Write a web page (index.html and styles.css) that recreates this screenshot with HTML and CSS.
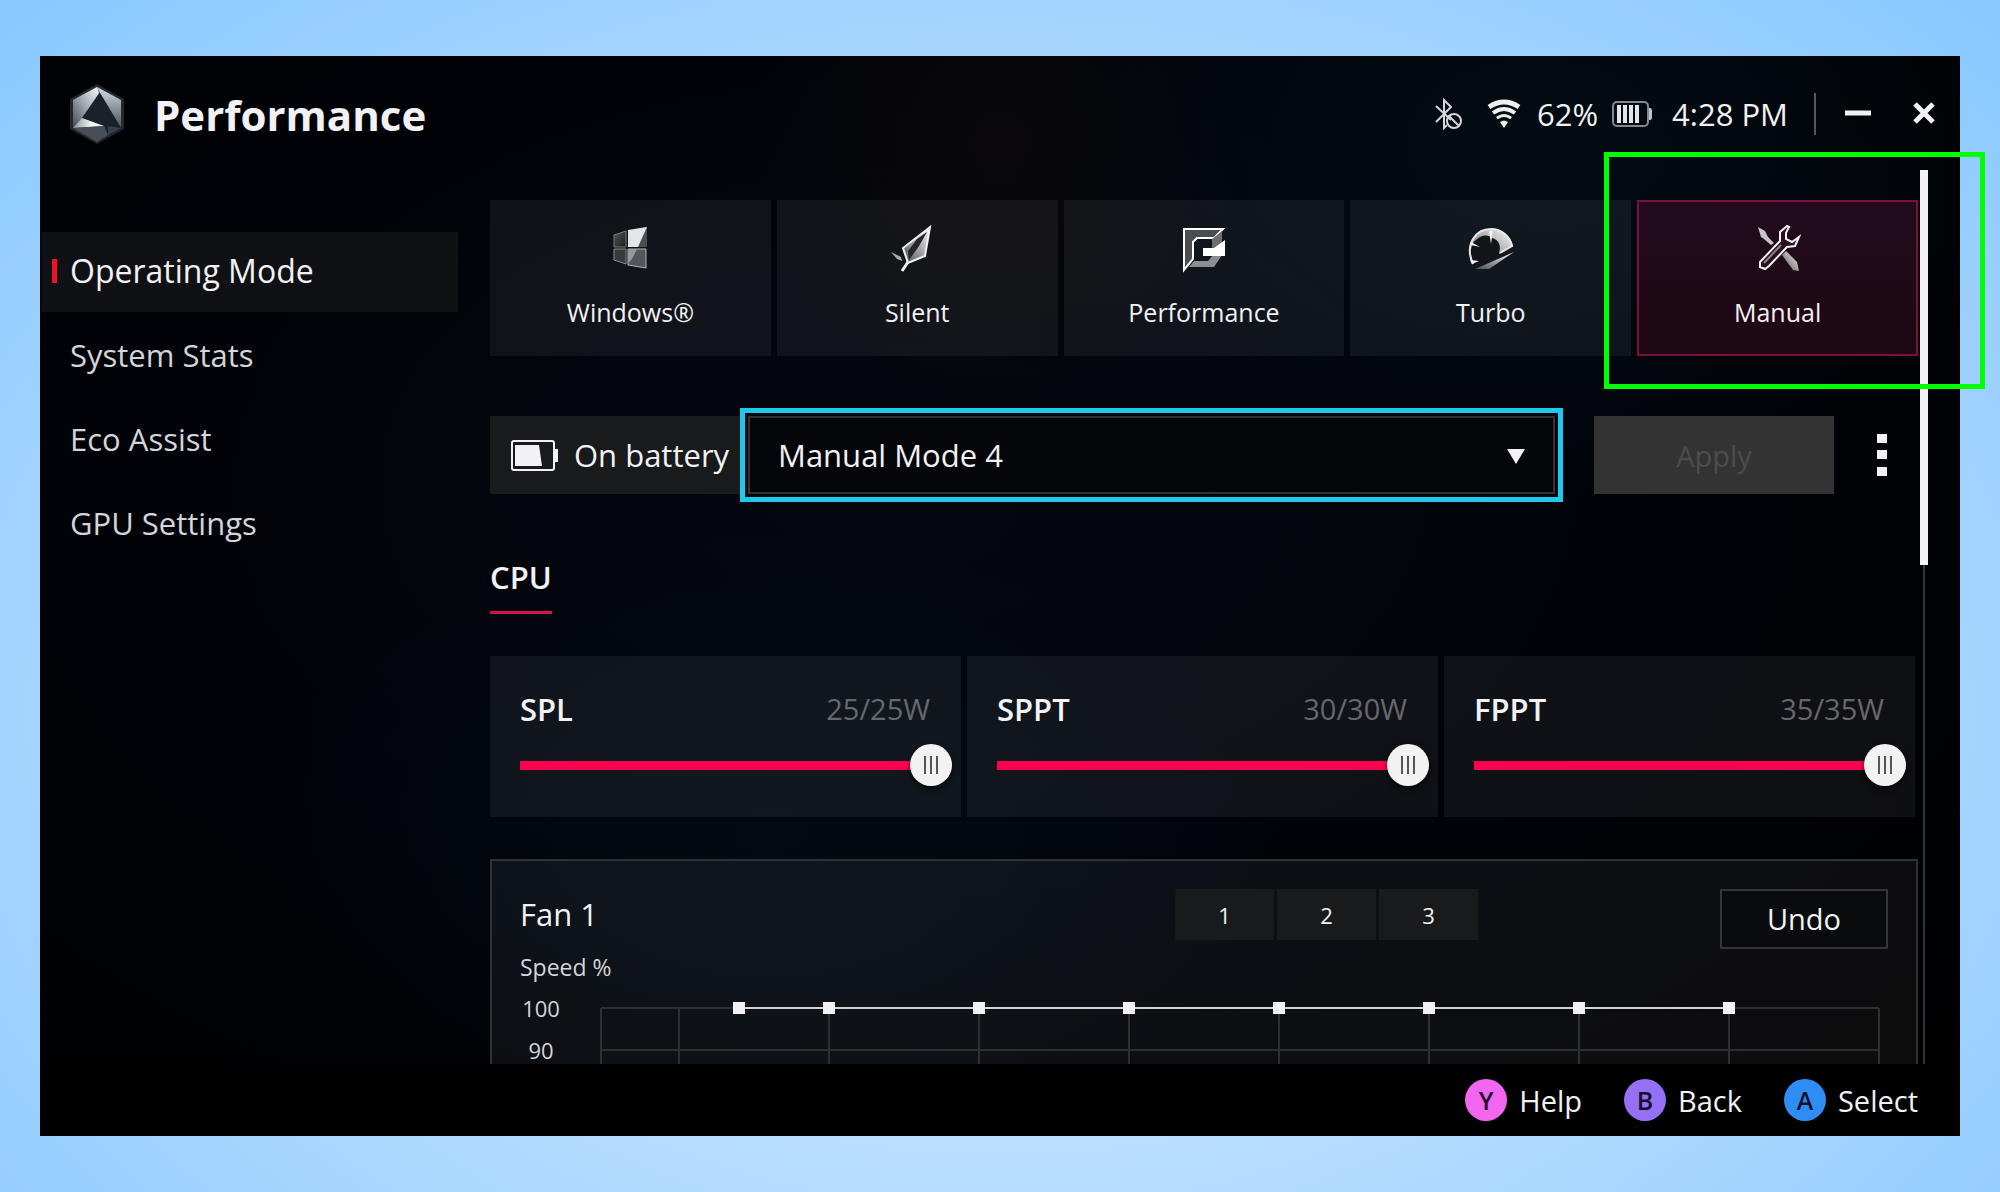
FILE: index.html
```html
<!DOCTYPE html>
<html lang="en">
<head>
    <meta charset="UTF-8">
    <meta name="viewport" content="width=device-width, initial-scale=1.0">
    <title>Performance</title>
    <link rel="stylesheet" href="styles.css">
</head>
<body>

    <div class="app">
        <header class="header">
            <svg class="logo" viewBox="0 0 54 60" aria-hidden="true">
                <defs>
                    <linearGradient id="logoLeft" x1="1" y1="0" x2="0" y2="1">
                        <stop offset="0" stop-color="#f8fbff"/>
                        <stop offset="0.45" stop-color="#a9b0b9"/>
                        <stop offset="1" stop-color="#454a52"/>
                    </linearGradient>
                    <linearGradient id="logoRight" x1="0" y1="0" x2="0" y2="1">
                        <stop offset="0" stop-color="#d4dae2"/>
                        <stop offset="1" stop-color="#4a525c"/>
                    </linearGradient>
                    <linearGradient id="logoNotch" x1="0" y1="0" x2="1" y2="0">
                        <stop offset="0" stop-color="#8d939b"/>
                        <stop offset="0.6" stop-color="#f2f5f8"/>
                        <stop offset="1" stop-color="#ffffff"/>
                    </linearGradient>
                </defs>
                <path d="M27 0 54 15V45L27 60 0 45V15Z" fill="#23282e"/>
                <path d="M27 3 51 16V44L27 57 3 44V16Z" fill="#3b434c"/>
                <path d="M27 3 3 16V44L12 34 29 9Z" fill="url(#logoLeft)"/>
                <path d="M27 3 51 16V44L30 9Z" fill="url(#logoRight)"/>
                <path d="M30 9 12 34 34 42 38 52 51 44Z" fill="#1b212a"/>
                <path d="M12 34 34 42 3 44Z" fill="url(#logoNotch)"/>
                <path d="M3 44 34 42 38 51 27 58Z" fill="#474e57"/>
                <path d="M38 42 51 44 38 51Z" fill="#35424d"/>
            </svg>
            <h1 class="title">Performance</h1>

            <div class="status">
                <svg class="bluetooth" viewBox="0 0 28 32" fill="none" stroke="#d4d6da" stroke-width="2" aria-hidden="true">
                    <path d="M1 8 16 22M1 24 16 9 9 2V30L12 27"/>
                    <circle cx="19" cy="23" r="7"/>
                    <path d="M14 18 24 28"/>
                </svg>
                <svg class="wifi" viewBox="0 0 32 28" fill="none" stroke="#f0f0f2" aria-hidden="true">
                    <path d="M1 7Q16-3 31 7" stroke-width="5"/>
                    <path d="M5 13Q16 5 27 13" stroke-width="4"/>
                    <path d="M9 18Q16 13 23 18" stroke-width="3"/>
                    <path d="M12 22Q16 19 20 22L16 28Z" fill="#f0f0f2" stroke="none"/>
                </svg>
                <span class="percent">62%</span>
                <svg class="battery" viewBox="0 0 40 26" aria-hidden="true">
                    <rect x="1" y="1" width="35" height="24" rx="4" fill="none" stroke="#85878b" stroke-width="2"/>
                    <path d="M37 7h1q2 0 2 3v6q0 3-2 3h-1z" fill="#c2c4c8"/>
                    <path d="M5 4h4v18H5zM11 4h4v18h-4zM17 4h4v18h-4zM23 4h4v18h-4z" fill="#e4e5e8"/>
                </svg>
                <span class="clock">4:28 PM</span>
            </div>

            <div class="window-buttons">
                <button type="button" aria-label="Minimize">
                    <svg width="26" height="24" viewBox="0 0 26 24"><path d="M0 11H26" stroke="#f2f2f4" stroke-width="5"/></svg>
                </button>
                <button type="button" aria-label="Close">
                    <svg width="22" height="24" viewBox="0 0 22 24"><path d="M2 2 20 20M20 2 2 20" stroke="#f2f2f4" stroke-width="5"/></svg>
                </button>
            </div>
        </header>

        <div class="body">
            <nav class="sidebar">
                <a class="active" href="#operating">Operating Mode</a>
                <a href="#stats">System Stats</a>
                <a href="#eco">Eco Assist</a>
                <a href="#gpu">GPU Settings</a>
            </nav>

            <main class="content">
                <div class="modes">
                    <button type="button" class="mode">
                        <svg width="48" height="48" viewBox="0 0 48 48" aria-hidden="true">
                            <defs>
                                <linearGradient id="steel" x1="1" y1="0" x2="0" y2="1">
                                    <stop offset="0" stop-color="#ffffff"/>
                                    <stop offset="1" stop-color="#4a4a4d"/>
                                </linearGradient>
                                <linearGradient id="dark" x1="0" y1="0" x2="1" y2="1">
                                    <stop offset="0" stop-color="#55565a"/>
                                    <stop offset="1" stop-color="#1a1b1d"/>
                                </linearGradient>
                            </defs>
                            <path d="M8 11 20 7V23H8Z" fill="url(#dark)" stroke="#77787b"/>
                            <path d="M8 25H20V40L8 36Z" fill="#38393c" stroke="#8a8b8e"/>
                            <path d="M22 6 41 3V23H22Z" fill="#4c4d50"/>
                            <path d="M22 6 41 3 32 23H22Z" fill="#e4e5e8"/>
                            <path d="M22 25H40V44L22 41Z" fill="#55565a" stroke="#b4b5b8"/>
                            <path d="M22 25H31L26 35 22 39Z" fill="#98999c"/>
                        </svg>
                        <span>Windows®</span>
                    </button>
                    <button type="button" class="mode">
                        <svg width="48" height="48" viewBox="0 0 48 48" aria-hidden="true">
                            <path d="M37 3 32 32 15 39 10 24Z" fill="url(#steel)" stroke="#f2f2f4" stroke-width="2"/>
                            <path d="M34 8 26 22 16 36 15 27 24 15Z" fill="#242528"/>
                            <path d="M15 38 9 47" stroke="#f2f2f4" stroke-width="3"/>
                            <path d="M-2 28 8 33 9 37 4 35Z" fill="#a9aaad"/>
                        </svg>
                        <span>Silent</span>
                    </button>
                    <button type="button" class="mode">
                        <svg width="48" height="48" viewBox="0 0 48 48" aria-hidden="true">
                            <path d="M4 5H43L34 14H17L13 18V35L4 46Z" fill="#4c4d50" stroke="#ffffff" stroke-width="2"/>
                            <path d="M32 15 42 7V20L32 26Z" fill="#6d6e71"/>
                            <path d="M14 37H28L33 31H42L34 43H9Z" fill="#8c8d90"/>
                            <path d="M23 24H34L45 16V32H23Z" fill="#ffffff"/>
                        </svg>
                        <span>Performance</span>
                    </button>
                    <button type="button" class="mode">
                        <svg width="48" height="48" viewBox="0 0 48 48" aria-hidden="true">
                            <path d="M5 40C-3 19 9 5 25 5 37 5 44 14 46 22L32 30C34 21 32 17 25 14 22 9 11 13 6 19" fill="url(#steel)"/>
                            <path d="M7 19C13 10 21 10 24 14 33 16 34 22 31 30 25 36 14 40 7 37 2 31 3 24 7 19Z" fill="#121417"/>
                            <path d="M6 40C-3 20 9 5 24 5 35 5 43 13 45 22L33 29" fill="none" stroke="#e8e8ea" stroke-width="2"/>
                            <path d="M22 7H26L24 20ZM4 18 13 23 4 21ZM3 36 12 37 5 40Z" fill="#f2f2f4"/>
                            <path d="M47 28 22 45H8Z" fill="url(#steel)"/>
                        </svg>
                        <span>Turbo</span>
                    </button>
                    <button type="button" class="mode selected">
                        <svg width="48" height="48" viewBox="0 0 48 48" aria-hidden="true">
                            <path d="M4 3 11 7 14 13 20 19 17 21 10 15 7 13Z" fill="#c8c4c8"/>
                            <path d="M28 31 32 27 43 38 45 47 39 46Z" fill="url(#steel)"/>
                            <path d="M33 2 26 8 26 17 6 38 6 43 11 45 15 42 33 23 41 22 45 13 38 18 32 15 32 9 35 3Z" fill="#2a1019" stroke="#f2f2f4" stroke-width="2"/>
                            <path d="M27 21 10 39" stroke="#95808a" stroke-width="2"/>
                        </svg>
                        <span>Manual</span>
                    </button>
                </div>

                <div class="profile">
                    <label class="power-source" for="profile">
                        <svg width="48" height="32" viewBox="0 0 48 32" aria-hidden="true">
                            <rect x="1" y="2" width="42" height="29" rx="2" fill="none" stroke="#f2f2f4" stroke-width="2"/>
                            <path d="M44 10h3v13h-3z" fill="#f2f2f4"/>
                            <path d="M4 6H28L31 27H4Z" fill="#f2f2f4"/>
                        </svg>
                        On battery
                    </label>
                    <div class="select-box">
                        <select id="profile">
                            <option>Manual Mode 4</option>
                        </select>
                        <svg class="arrow" viewBox="0 0 18 15" aria-hidden="true"><path d="M0 0H18L9 15Z" fill="#f2f2f4"/></svg>
                    </div>
                    <button type="button" class="apply" disabled>Apply</button>
                    <button type="button" class="more" aria-label="More options">
                        <svg width="10" height="44" viewBox="0 0 10 44"><path d="M0 1h10v9H0zM0 17h10v9H0zM0 34h10v9H0z" fill="#f2f2f4"/></svg>
                    </button>
                </div>

                <h2 class="section-title">CPU</h2>

                <div class="limits">
                    <div class="limit">
                        <div class="limit-top"><label for="spl">SPL</label><output for="spl">25/25W</output></div>
                        <input type="range" id="spl" min="5" max="25" value="25">
                    </div>
                    <div class="limit">
                        <div class="limit-top"><label for="sppt">SPPT</label><output for="sppt">30/30W</output></div>
                        <input type="range" id="sppt" min="5" max="30" value="30">
                    </div>
                    <div class="limit">
                        <div class="limit-top"><label for="fppt">FPPT</label><output for="fppt">35/35W</output></div>
                        <input type="range" id="fppt" min="5" max="35" value="35">
                    </div>
                </div>

                <section class="fan">
                    <div class="fan-top">
                        <h3>Fan 1</h3>
                        <div class="presets">
                            <button type="button">1</button>
                            <button type="button">2</button>
                            <button type="button">3</button>
                        </div>
                        <button type="button" class="undo">Undo</button>
                    </div>
                    <div class="axis-title">Speed %</div>
                    <div class="chart">
                        <div class="axis">
                            <span>100</span>
                            <span>90</span>
                        </div>
                        <svg class="plot" viewBox="0 0 1280 100" aria-hidden="true">
                            <g fill="none" stroke="#2d2f30" stroke-width="2">
                                <path d="M1 21H1279M1 63H1279"/>
                                <path d="M1 21V100M79 21V100M229 21V100M379 21V100M529 21V100M679 21V100M829 21V100M979 21V100M1129 21V100M1279 21V100"/>
                            </g>
                            <path d="M139 21H1129" stroke="#d0d2d3" stroke-width="2"/>
                            <path d="M133 15h12v12h-12zM223 15h12v12h-12zM373 15h12v12h-12zM523 15h12v12h-12zM673 15h12v12h-12zM823 15h12v12h-12zM973 15h12v12h-12zM1123 15h12v12h-12z" fill="#f2f2f4"/>
                        </svg>
                    </div>
                </section>
            </main>

            <div class="scrollbar"><div class="thumb"></div></div>
        </div>

        <footer class="footer">
            <button type="button"><span class="key key-y">Y</span>Help</button>
            <button type="button"><span class="key key-b">B</span>Back</button>
            <button type="button"><span class="key key-a">A</span>Select</button>
        </footer>

        <!-- Green callout around the Manual card -->
        <div class="callout"></div>
    </div>

</body>
</html>
```

FILE: styles.css
```css
* {
    margin: 0;
    padding: 0;
    box-sizing: border-box;
}

body {
    background: radial-gradient(ellipse at 50% 60%, #c8e6ff 0%, #b8deff 45%, #88c8ff 100%);
    color: #f2f2f4;
    font-family: "Open Sans", "Noto Sans", sans-serif;
    font-size: 31px;
    height: 100vh;
    padding: 56px 40px;
    overflow: hidden;
}

button,
select {
    font: inherit;
    color: inherit;
    background: none;
    border: none;
    border-radius: 0;
}

svg {
    display: block;
    flex: none;
    overflow: visible;
}

.app {
    position: relative;
    display: flex;
    flex-direction: column;
    height: 100%;
    background:
        radial-gradient(ellipse at 78% 8%, #030c14 0%, transparent 25%),
        radial-gradient(ellipse at 50% 8%, #0a080a 0%, transparent 18%),
        radial-gradient(ellipse at 38% 72%, #020b12 0%, transparent 30%),
        radial-gradient(ellipse at 45% 40%, #04080e 0%, #010309 50%, #000000 100%);
}

/* Top bar */
.header {
    display: flex;
    align-items: center;
    height: 114px;
    padding: 2px 25px 0 30px;
}

.logo {
    width: 54px;
    height: 60px;
}

.title {
    margin-left: 30px;
    font-size: 42px;
    font-weight: 700;
}

.status {
    display: flex;
    align-items: center;
    margin-left: auto;
}

.bluetooth {
    width: 28px;
    height: 32px;
}

.wifi {
    width: 32px;
    height: 28px;
    margin: 0 17px 0 25px;
}

.battery {
    width: 40px;
    height: 26px;
    margin: 0 20px 0 14px;
}

.window-buttons {
    display: flex;
    align-items: center;
    gap: 42px;
    height: 42px;
    margin-left: 26px;
    padding-left: 29px;
    border-left: 2px solid #55575b;
}

/* Body */
.body {
    display: flex;
    flex: 1;
    min-height: 0;
    padding: 0 32px 0 2px;
}

.sidebar {
    display: flex;
    flex-direction: column;
    gap: 4px;
    width: 416px;
    padding-top: 62px;
}

.sidebar a {
    display: flex;
    align-items: center;
    height: 80px;
    padding: 0 0 3px 28px;
    color: #d3d5d8;
    text-decoration: none;
}

.sidebar .active {
    padding-left: 10px;
    background-color: #101114;
    color: #f2f2f4;
    font-size: 32px;
}

.sidebar .active::before {
    content: "";
    width: 5px;
    height: 24px;
    margin-right: 13px;
    background-color: #f0102a;
}

.content {
    flex: 1;
    min-width: 0;
    margin-left: 32px;
    padding-top: 30px;
    overflow: hidden;
}

.modes {
    display: grid;
    grid-template-columns: repeat(5, 1fr);
    gap: 6px;
}

.mode {
    display: flex;
    flex-direction: column;
    align-items: center;
    gap: 22px;
    height: 156px;
    padding-top: 24px;
    background-color: rgba(255, 255, 255, 0.06);
    font-size: 25px;
    line-height: 36px;
}

.mode.selected {
    background: linear-gradient(#220b1c, #1e0812);
    box-shadow: inset 0 0 0 2px #7c1038;
}

/* Profile row */
.profile {
    display: flex;
    height: 78px;
    margin-top: 60px;
}

.power-source {
    display: flex;
    align-items: center;
    gap: 15px;
    width: 252px;
    margin-right: 6px;
    padding-left: 21px;
    background-color: #181a1c;
    white-space: nowrap;
}

.select-box {
    position: relative;
    flex: 1;
    border: 2px solid #333333;
    background-color: #04060a;
    outline: 5px solid #20c8ee;
    outline-offset: 3px;
}

.select-box select {
    width: 100%;
    height: 100%;
    padding-left: 28px;
    appearance: none;
    outline: none;
}

.arrow {
    position: absolute;
    right: 28px;
    top: 31px;
    width: 18px;
    height: 15px;
    pointer-events: none;
}

.apply {
    width: 240px;
    margin-left: 39px;
    background-color: #333333;
    color: #4c4c4c;
    font-size: 29px;
}

.more {
    display: flex;
    align-items: center;
    justify-content: center;
    width: 42px;
    margin: 0 15px 0 27px;
}

/* CPU limits */
.section-title {
    width: fit-content;
    margin-top: 58px;
    padding-bottom: 9px;
    border-bottom: 3px solid #d4124e;
    font-size: 31px;
    font-weight: 600;
    line-height: 50px;
}

.limits {
    display: grid;
    grid-template-columns: repeat(3, 1fr);
    gap: 6px;
    margin-top: 42px;
    padding-right: 3px;
}

.limit {
    height: 161px;
    padding: 31px 9px 0 30px;
    background-color: rgba(255, 255, 255, 0.06);
}

.limit-top {
    display: flex;
    justify-content: space-between;
    padding-right: 22px;
    line-height: 44px;
}

.limit-top label {
    font-weight: 600;
}

.limit-top output {
    color: #66686b;
    font-size: 29px;
}

.limit input {
    display: block;
    width: 100%;
    height: 42px;
    margin-top: 13px;
    appearance: none;
    background: none;
}

.limit input::-webkit-slider-runnable-track {
    height: 9px;
    background-color: #ff0050;
}

.limit input::-webkit-slider-thumb {
    appearance: none;
    width: 42px;
    height: 42px;
    margin-top: -17px;
    border-radius: 50%;
    background:
        linear-gradient(90deg, #555 2px, transparent 2px 6px, #555 6px 8px, transparent 8px 12px, #555 12px) center / 14px 18px no-repeat,
        #f2f2f2;
    box-shadow: 0 3px 6px rgba(0, 0, 0, 0.6);
}

/* Fan curve */
.fan {
    margin-top: 42px;
    padding: 28px 28px 0;
    border: 2px solid #2f3133;
    border-bottom: none;
    background-color: rgba(255, 255, 255, 0.05);
}

.fan-top {
    display: flex;
    align-items: flex-start;
    height: 60px;
}

.fan-top h3 {
    font-size: 31px;
    font-weight: 400;
    line-height: 50px;
}

.presets {
    display: flex;
    gap: 3px;
    margin: 0 242px 0 auto;
}

.presets button {
    width: 99px;
    height: 51px;
    background-color: #191a1c;
    font-size: 22px;
}

.undo {
    width: 168px;
    height: 60px;
    border: 2px solid #333537;
    background-color: #0a0b0d;
    font-size: 29px;
    line-height: 56px;
}

.axis-title {
    color: #d3d5d8;
    font-size: 23px;
    line-height: 36px;
}

.chart {
    display: flex;
    padding-top: 2px;
}

.axis {
    display: flex;
    flex-direction: column;
    width: 42px;
    margin-right: 38px;
    color: #d3d5d8;
    font-size: 22px;
    line-height: 42px;
    text-align: center;
}

.plot {
    flex: 1;
    min-width: 0;
    margin-right: 8px;
}

/* Scrollbar */
.scrollbar {
    width: 8px;
    margin-left: 2px;
    background: linear-gradient(#333333, #333333) center / 2px 100% no-repeat;
}

.thumb {
    height: 395px;
    background-color: #f2f2f2;
}

/* Button hints */
.footer {
    display: flex;
    align-items: center;
    justify-content: flex-end;
    gap: 42px;
    height: 72px;
    padding-right: 42px;
    background-color: #000000;
}

.footer button {
    display: flex;
    align-items: center;
    gap: 12px;
    font-size: 29px;
}

.key {
    width: 42px;
    height: 42px;
    border-radius: 50%;
    color: #1a1030;
    font-size: 25px;
    font-weight: 600;
    line-height: 42px;
}

.key-y {
    background-color: #f266f0;
}

.key-b {
    background-color: #9670f4;
}

.key-a {
    background-color: #2f8df6;
}

.callout {
    position: absolute;
    top: 96px;
    right: -25px;
    width: 381px;
    height: 237px;
    border: 5px solid #00ff00;
    pointer-events: none;
}
```
